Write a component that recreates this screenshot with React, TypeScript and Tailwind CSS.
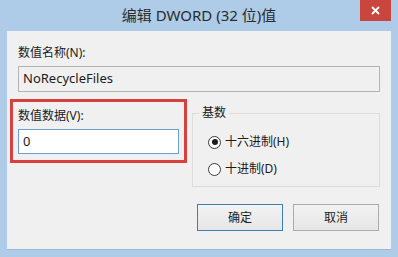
import React from "react";

const FONT = { fontFamily: '"Noto Sans", "Noto Sans CJK SC", sans-serif' };

function Radio({ checked, label }: { checked?: boolean; label: string }) {
    return (
        <div className="flex items-center h-[16px]">
            <span className="w-[13px] h-[13px] rounded-full border border-[#3a3a3a] bg-white flex items-center justify-center">
                {checked && <span className="w-[6px] h-[6px] rounded-full bg-[#1a1a1a]" />}
            </span>
            <span className="ml-[4px] text-[12px] text-[#1b1b1b]">{label}</span>
        </div>
    );
}

export default function App() {
    return (
        <div className="w-[398px] h-[257px] bg-[#aecbe8] flex flex-col overflow-hidden" style={FONT}>
            {/* title bar */}
            <div className="h-[31px] flex px-[7px] shrink-0">
                <div className="w-[31px]" />
                <div className="flex-1 text-center text-[15px] leading-[18px] pt-[6px] text-[#2b2b2b]">
                    编辑 DWORD (32 位)值
                </div>
                <button className="w-[31px] h-[21px] bg-[#c9463f] flex items-center justify-center">
                    <svg width="9" height="9" viewBox="0 0 9 9">
                        <path d="M1 1 L8 8 M8 1 L1 8" stroke="#fff" strokeWidth="1.8" />
                    </svg>
                </button>
            </div>

            {/* client area */}
            <div className="mx-[7px] h-[219px] bg-[#f0f0f0] border-b border-[#9db7d2] flex flex-col">
                <div className="px-[11px] pt-[14px]">
                    <div className="text-[12px] leading-[16px] text-[#1b1b1b]">数值名称(N):</div>
                    <div className="mt-[5px] h-[26px] w-[362px] border border-[#b4b4b4] bg-[#f0f0f0] flex items-center px-[4px] text-[13px] text-[#1b1b1b]">
                        NoRecycleFiles
                    </div>
                </div>

                <div className="flex mt-[7px] pl-[3px]">
                    <div className="w-[177px] h-[64px] border-[3px] border-[#d8403f] px-[5px] pt-[6px]">
                        <div className="text-[12px] leading-[16px] text-[#1b1b1b]">数值数据(V):</div>
                        <div className="mt-[5px] h-[25px] w-[161px] border border-[#6c9fd0] bg-white flex items-center px-[4px] text-[13px] text-[#1b1b1b]">
                            0
                        </div>
                    </div>

                    <fieldset className="ml-[5px] mt-[7px] w-[188px] h-[81px] border border-[#dcdcdc] px-0 pt-[14px]">
                        <legend className="ml-[6px] px-[3px] text-[12px] leading-[14px] text-[#1b1b1b]">基数</legend>
                        <div className="flex flex-col gap-[11px] pl-[15px]">
                            <Radio checked label="十六进制(H)" />
                            <Radio label="十进制(D)" />
                        </div>
                    </fieldset>
                </div>

                <div className="flex justify-end gap-[10px] pr-[12px] mt-[17px]">
                    <button className="w-[86px] h-[27px] border border-[#3c7fb1] bg-gradient-to-b from-[#f2f2f2] to-[#e6e6e6] text-[12px] text-[#1b1b1b]">
                        确定
                    </button>
                    <button className="w-[86px] h-[27px] border border-[#acacac] bg-gradient-to-b from-[#f2f2f2] to-[#e6e6e6] text-[12px] text-[#1b1b1b]">
                        取消
                    </button>
                </div>
            </div>
        </div>
    );
}
